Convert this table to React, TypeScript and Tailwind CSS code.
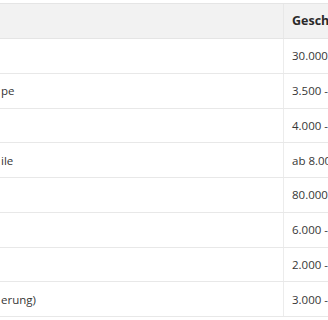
import React from 'react';

interface Row {
  label: string;
  cost: string;
}

const rows: Row[] = [
  { label: '', cost: '30.000 - 60.000 €' },
  { label: 'pe', cost: '3.500 - 8.000 €' },
  { label: '', cost: '4.000 - 10.000 €' },
  { label: 'ile', cost: 'ab 8.000 €' },
  { label: '', cost: '80.000 - 150.000 €' },
  { label: '', cost: '6.000 - 12.000 €' },
  { label: '', cost: '2.000 - 5.000 €' },
  { label: 'erung)', cost: '3.000 - 7.000 €' },
];

const App: React.FC = () => {
  return (
    <div
      className="w-[328px] h-[320px] overflow-hidden bg-white pt-[3px] text-[#363636] text-[11.5px]"
      style={{ fontFamily: '"Open Sans", "Liberation Sans", sans-serif' }}
    >
      <div className="w-[440px] border-t border-[#e5e5e5]">
        <div className="flex h-[35px] bg-[#f2f2f2] border-b border-[#e5e5e5]">
          <div className="w-[284px] shrink-0 border-r border-[#e8e8e8]" />
          <div className="flex items-center pl-[8px] font-bold text-[12.5px] text-[#2a2a2a] whitespace-nowrap">
            Geschätzte Kosten
          </div>
        </div>

        {rows.map((r, i) => (
          <div key={i} className="flex h-[34.75px] border-b border-[#e8e8e8]">
            <div className="w-[284px] shrink-0 flex items-center pl-[1px] border-r border-[#ececec] whitespace-nowrap">
              {r.label}
            </div>
            <div className="flex items-center pl-[8px] whitespace-nowrap">{r.cost}</div>
          </div>
        ))}
      </div>
    </div>
  );
};

export default App;
